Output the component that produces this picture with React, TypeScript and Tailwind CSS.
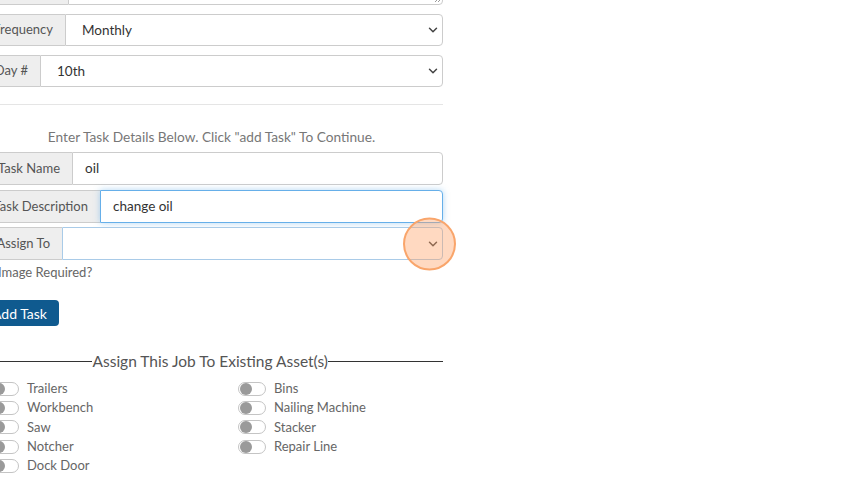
import { ChevronDown } from "lucide-react";

const leftAssets = ["Trailers", "Workbench", "Saw", "Notcher", "Dock Door"];
const rightAssets = ["Bins", "Nailing Machine", "Stacker", "Repair Line"];

function Addon({ children, w }: { children: React.ReactNode; w: string }) {
  return (
    <span className={`flex items-center justify-end whitespace-nowrap border border-r-0 border-[#ccc] bg-[#eee] pr-3 text-[13px] text-[#555] rounded-l ${w}`}>
      {children}
    </span>
  );
}

function SelectRow({ label, value, w }: { label: string; value: string; w: string }) {
  return (
    <div className="flex h-[32px]">
      <Addon w={w}>{label}</Addon>
      <div className="relative flex flex-1 items-center border border-[#ccc] rounded-r bg-white px-4 text-[13.5px] text-[#333]">
        {value}
        <ChevronDown className="absolute right-[2px] h-[14px] w-[14px] text-[#444]" strokeWidth={2.5} />
      </div>
    </div>
  );
}

function Toggle({ label }: { label: string }) {
  return (
    <div className="flex h-[19.3px] items-center gap-2">
      <span className="flex h-[14px] w-[28px] items-center rounded-full border border-[#c4c4c4] bg-white">
        <span className="ml-[0.5px] h-[12px] w-[12px] rounded-full bg-[#9a9a9a]" />
      </span>
      <span className="text-[13px] text-[#666]">{label}</span>
    </div>
  );
}

export default function App() {
  return (
    <div className="h-[482px] w-[860px] overflow-hidden bg-white font-['Lato','Liberation_Sans',sans-serif]">
      <div className="-ml-5 flex w-[463px] flex-col">
        {/* description textarea (cut off at top) */}
        <div className="-mt-[45px] flex h-[50px]">
          <span className="w-[88px] border border-r-0 border-[#ccc] bg-[#eee] rounded-l" />
          <div className="relative flex-1 border border-[#ccc] rounded-r bg-white">
            <svg className="absolute bottom-[1px] right-[1px]" width="8" height="8" viewBox="0 0 8 8">
              <path d="M7 2 L2 7 M7 5 L5 7" stroke="#999" strokeWidth="1" />
            </svg>
          </div>
        </div>

        <div className="mt-[9px]">
          <SelectRow label="Frequency" value="Monthly" w="w-[85px]" />
        </div>
        <div className="mt-[9px]">
          <SelectRow label="Day #" value="10th" w="w-[60px]" />
        </div>

        <div className="mt-[17px] ml-5 h-px bg-[#e5e5e5]" />

        <p className="mt-[22px] h-[20px] text-center text-[13.7px] leading-[20px] text-[#777]">
          Enter Task Details Below. Click "add Task" To Continue.
        </p>

        <div className="mt-[5px] flex h-[33px]">
          <Addon w="w-[92px]">Task Name</Addon>
          <div className="flex flex-1 items-center border border-[#ccc] rounded-r bg-white px-3 text-[13.5px] text-[#333]">oil</div>
        </div>
        <div className="mt-[5px] flex h-[33px]">
          <Addon w="w-[120px]">Task Description</Addon>
          <div className="flex flex-1 items-center border border-[#66afe9] rounded-r bg-white px-3 text-[13.5px] text-[#333] shadow-[0_0_6px_rgba(102,175,233,0.5)]">
            change oil
          </div>
        </div>
        <div className="mt-[4px] flex h-[33px]">
          <Addon w="w-[82px]">Assign To</Addon>
          <div className="relative flex flex-1 items-center border border-[#a9cbe8] rounded-r bg-white">
            <ChevronDown className="absolute right-[2px] h-[14px] w-[14px] text-[#444]" strokeWidth={2.5} />
            <span className="absolute -right-[14px] top-1/2 h-[53px] w-[53px] -translate-y-1/2 rounded-full border-2 border-[#f9a56b] bg-[rgba(255,160,100,0.4)]" />
          </div>
        </div>

        <label className="mt-[3px] flex h-[20px] items-center gap-[5px] text-[13px] text-[#666]">
          <input type="checkbox" className="h-[13px] w-[13px]" />
          Image Required?
        </label>

        <div className="mt-[17px]">
          <button className="h-[26px] rounded bg-[#0f5a8f] px-3 text-[14px] text-white">Add Task</button>
        </div>

        <div className="mt-[24px] ml-5 flex items-center">
          <span className="h-px flex-1 bg-[#333]" />
          <span className="text-[15.5px] text-[#555]">Assign This Job To Existing Asset(s)</span>
          <span className="h-px w-[115px] bg-[#333]" />
        </div>

        <div className="mt-[6px] grid grid-cols-[247px_1fr] pl-[11px]">
          <div className="flex flex-col">
            {leftAssets.map((a) => (
              <Toggle key={a} label={a} />
            ))}
          </div>
          <div className="flex flex-col">
            {rightAssets.map((a) => (
              <Toggle key={a} label={a} />
            ))}
          </div>
        </div>
      </div>
    </div>
  );
}
